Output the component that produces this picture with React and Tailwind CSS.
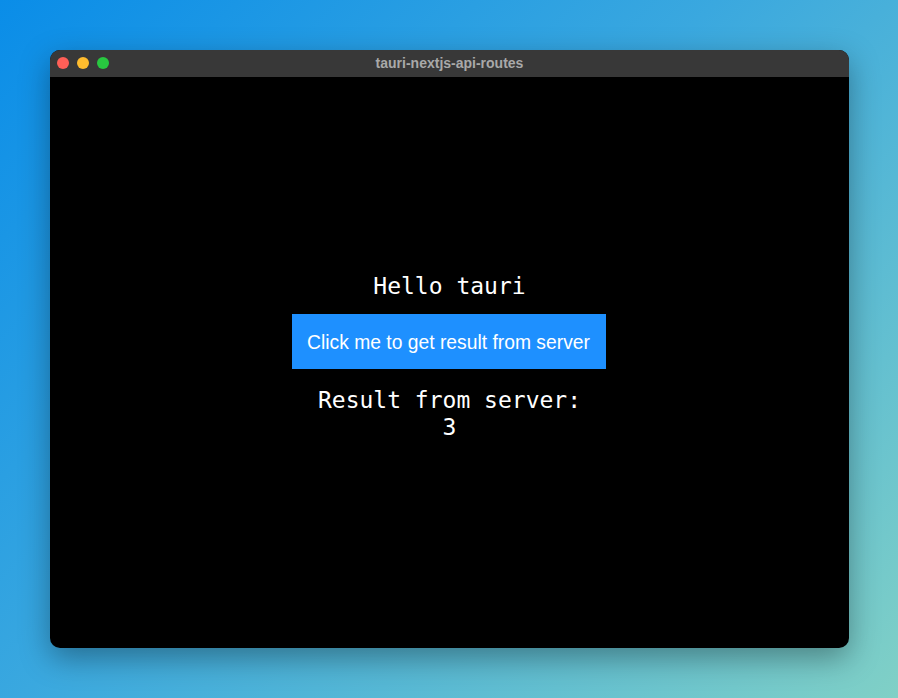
export default function App() {
  return (
    <div className="w-[898px] h-[698px] bg-[linear-gradient(135deg,#0a8de8_0%,#3aa8df_45%,#80d0c6_100%)] pt-[50px] pl-[50px] overflow-hidden">
      <div className="w-[799px] h-[598px] rounded-[10px] overflow-hidden bg-black shadow-[0_10px_30px_rgba(0,0,0,0.35)] flex flex-col">
        <div className="h-[27px] bg-[#383838] relative flex items-center justify-center shrink-0">
          <div className="absolute left-[7px] top-[7px] flex gap-[8px]">
            <div className="w-[12px] h-[12px] rounded-full bg-[#fe5f57]" />
            <div className="w-[12px] h-[12px] rounded-full bg-[#febc2e]" />
            <div className="w-[12px] h-[12px] rounded-full bg-[#28c840]" />
          </div>
          <span className="text-[14px] font-bold text-[#a9a9a9] font-['Liberation_Sans',Arial,sans-serif]">tauri-nextjs-api-routes</span>
        </div>
        <div className="flex-1 flex flex-col items-center pt-[196px] text-white font-['DejaVu_Sans_Mono','Liberation_Mono',monospace] text-[23px] leading-[27px]">
          <div>Hello tauri</div>
          <button className="mt-[14px] w-[314px] h-[55px] pt-[2px] bg-[#1e90ff] text-white text-[19.3px] font-['Liberation_Sans',Arial,sans-serif] -translate-x-[1px]">
            Click me to get result from server
          </button>
          <div className="mt-[18px] text-center">
            <div>Result from server:</div>
            <div>3</div>
          </div>
        </div>
      </div>
    </div>
  );
}
